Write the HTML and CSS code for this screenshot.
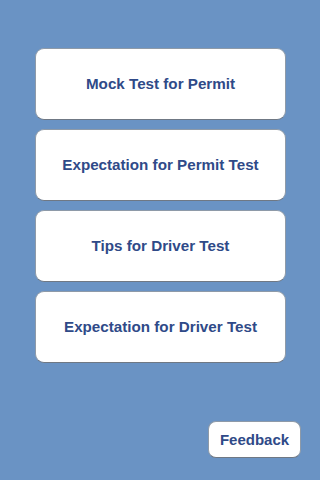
FILE: index.html
```html
<!DOCTYPE html>
<html lang="en">
<head>
    <meta charset="UTF-8">
    <meta name="viewport" content="width=device-width, initial-scale=1.0">
    <title>Driver Test</title>
    <link rel="stylesheet" href="styles.css">
</head>
<body>
    <div class="menu">
        <button class="menu-button">Mock Test for Permit</button>
        <button class="menu-button">Expectation for Permit Test</button>
        <button class="menu-button">Tips for Driver Test</button>
        <button class="menu-button">Expectation for Driver Test</button>
    </div>
    <div class="footer">
        <button class="feedback-button">Feedback</button>
    </div>
</body>
</html>
```

FILE: styles.css
```css
html, body {
    margin: 0;
    height: 100%;
}
body {
    font-family: "Liberation Sans", Arial, sans-serif;
    background-color: #6a93c4;
    display: flex;
    flex-direction: column;
    box-sizing: border-box;
    padding: 48px 0 22px;
}
.menu {
    display: flex;
    flex-direction: column;
    align-items: center;
    gap: 9px;
    padding-left: 1px;
}
.menu-button {
    width: 251px;
    height: 72px;
    background-color: #fff;
    border: 1px solid #8e9aa8;
    border-bottom-color: #6f7884;
    border-radius: 9px;
    color: #2f4a88;
    font-family: inherit;
    font-size: 15.2px;
    font-weight: bold;
    cursor: pointer;
    padding: 0 0 2px;
}
.footer {
    margin-top: auto;
    display: flex;
    justify-content: flex-end;
    padding-right: 19px;
}
.feedback-button {
    width: 93px;
    height: 37px;
    background-color: #fff;
    border: 1px solid #8e9aa8;
    border-bottom-color: #6f7884;
    border-radius: 8px;
    color: #2f4a88;
    font-family: inherit;
    font-size: 15px;
    font-weight: bold;
    cursor: pointer;
    padding: 0;
}
```
